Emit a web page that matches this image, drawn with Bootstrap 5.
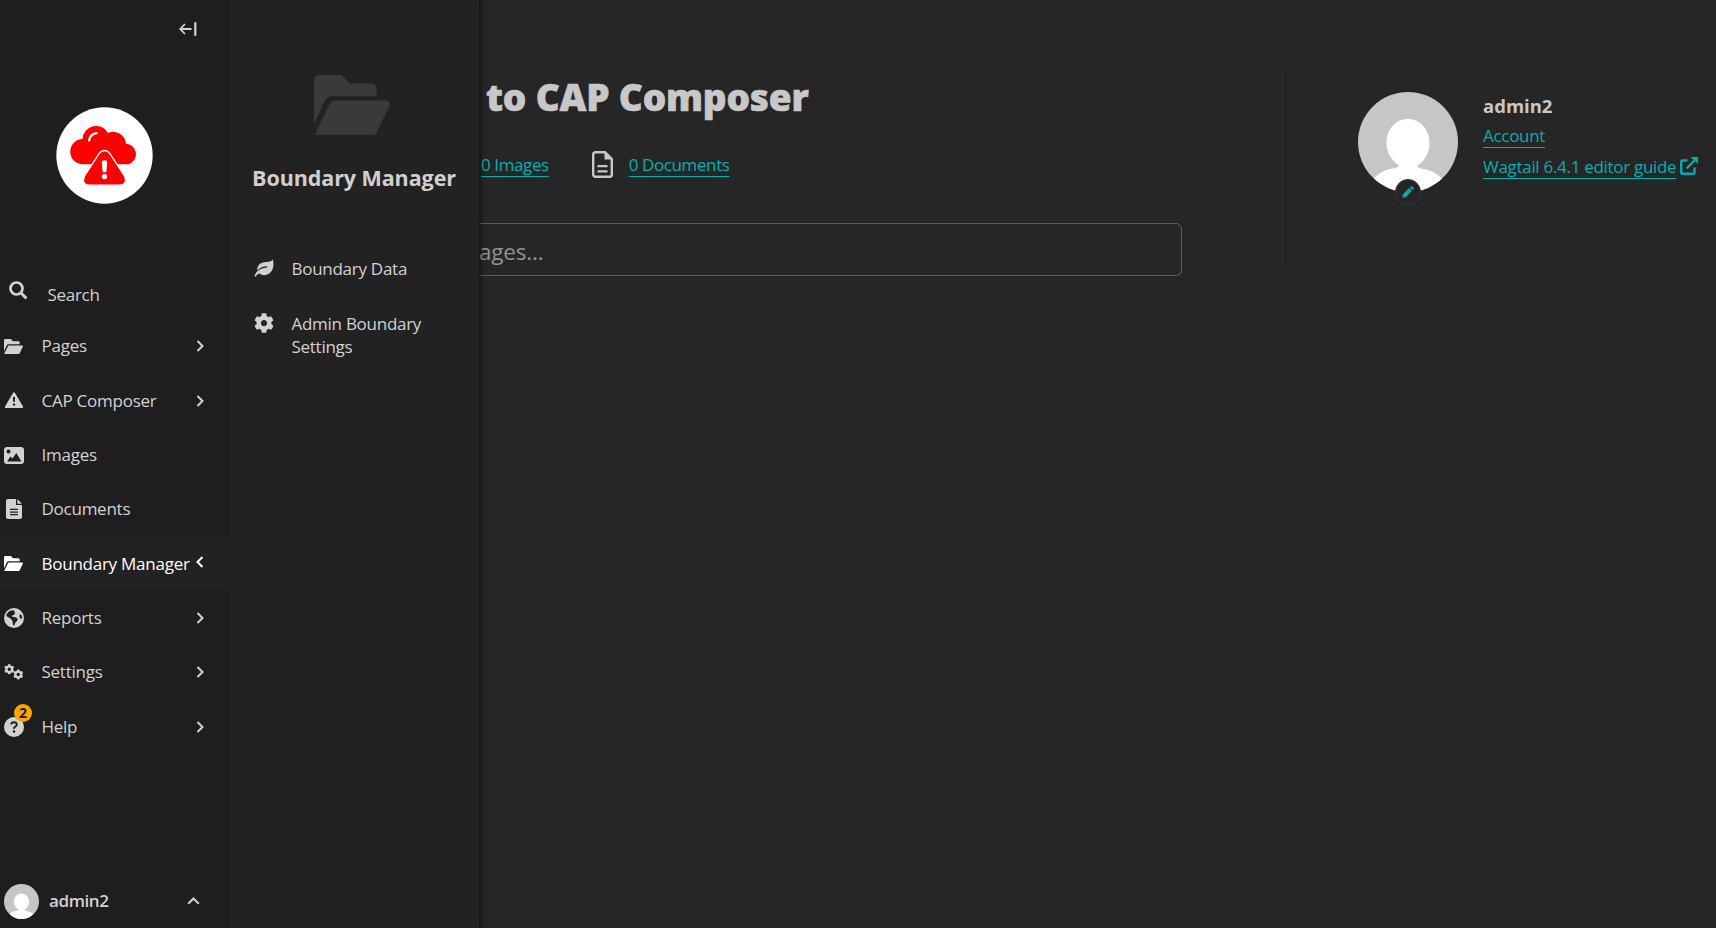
<!DOCTYPE html>
<html lang="en">
<head>
<meta charset="utf-8">
<meta name="viewport" content="width=device-width, initial-scale=1">
<title>CAP Composer</title>
<link href="https://cdn.jsdelivr.net/npm/bootstrap@5.3.0/dist/css/bootstrap.min.css" rel="stylesheet">
<style>
body{height:928px;overflow:hidden;background:#262626;color:#c8c8c8;font-family:"Open Sans","Noto Sans",sans-serif;font-size:17px;line-height:24px}
svg{display:block;fill:currentColor;flex:none}
.side{width:229px;background:#1e1e1e;color:#d2d2d2}
.collapse-row{height:106.5px;padding:22px 32px 0 0}
.logo{margin:0 0 0 56px}
.menu-search{margin-top:73.5px;height:41.5px;padding-left:9px}
.menu-search svg{margin-top:4px}
.menu-search span{margin:5.500px 0 0 19.500px;letter-spacing:-.3px}
.item{height:54.33px;padding:1.5px 25px 0 4px;letter-spacing:-.25px}
.item .ic{width:20px;margin-right:17.5px;position:relative}
.item.on{background:#222;color:#fff}
.item.on .chev{margin-bottom:3px}
.count{position:absolute;left:10px;top:-13px;width:18px;height:18px;border-radius:50%;background:#ffa500;color:#1e1e1e;font-size:14px;font-weight:700;line-height:17px;text-align:center;letter-spacing:0}
.userbar{height:54px;padding:0 29px 0 4px;font-weight:600}
.userbar span{margin-left:10px;letter-spacing:-.4px}
.face{border-radius:50%}
.fly{width:250px;background:#222;color:#d2d2d2;box-shadow:2px 0 4px rgba(0,0,0,.5);z-index:2;padding-top:75px}
.fly .big{margin-left:85px;color:#3a3a3a}
.fly h2{font-size:21.5px;font-weight:700;line-height:28px;margin:29px 0 0;letter-spacing:-.08px;color:#d0d0d0}
.fly-item{padding-left:25px;line-height:23px;letter-spacing:-.27px}
.fly-item svg{margin-right:17.5px}
.maincol{padding-top:72px}
.left{width:803px}
.left h1{font-size:37px;font-weight:800;line-height:44px;margin:3px 0 0 7px;letter-spacing:-.18px;-webkit-text-stroke:.6px currentColor}
.stats{margin:31px 0 0 2px;height:30px;letter-spacing:-.4px}
a,a:hover{color:#00b0b1}
a{text-decoration:underline;text-decoration-thickness:1px;text-underline-offset:5px}
.find{margin-top:43px;width:703px;height:53px;border:1px solid #5c5c5c;border-left:0;border-radius:0 6px 6px 0;color:#929292;font-size:22.5px;letter-spacing:-.2px}
.right{border-left:1px solid #333;height:194px;padding:20px 0 0 75px}
.ava{width:100px;height:100px;margin-right:25px}
.edit{position:absolute;left:37px;top:87px;width:26px;height:26px;border-radius:50%;background:#262626;border:1px solid #333;color:#00b0b1}
.who{font-size:18.5px;font-weight:700;line-height:28px}
.lk{line-height:31px;letter-spacing:-.3px}
</style>
</head>
<body class="d-flex">
<svg width="0" height="0" class="position-absolute">
<defs>
<symbol id="folder" viewBox="252 75 229 181"><path d="M252 223V92q0-17 17-17h66l24 26h65q17 0 17 17v21H306q-14 0-20 11z"/><path d="M254 255l45-93q5-10 14-10h156q15 3 10 18l-39 79q-3 6-10 6z"/></symbol>
<symbol id="person" viewBox="0 0 100 100"><path fill="#c6c6c6" d="M0 0h100v100H0z"/><path fill="#fff" d="M50 27c12 0 21.500 10 21.500 24 0 10-5 18-12.500 23 1 2 4 3 9 3.500 9 2 17 8 21 17V105H11V94c4-9 12-15 21-17 5-.5 8-1.500 9-3.500-7.500-5-12.500-13-12.500-22.500C28.500 37 38 27 50 27z"/></symbol>
<symbol id="chev" viewBox="0 0 8 12"><path d="M1.500 1l5 5-5 5" fill="none" stroke="currentColor" stroke-width="2"/></symbol>
<symbol id="gear" viewBox="0 0 512 512"><path d="M487.400 315.700l-42.600-24.600c4.300-23.200 4.300-47 0-70.200l42.600-24.600c4.900-2.800 7.100-8.600 5.500-14-11.100-35.600-30-67.800-54.700-94.600-3.800-4.100-10-5.100-14.800-2.300L380.800 110c-17.900-15.400-38.500-27.300-60.800-35.100V25.800c0-5.600-3.900-10.500-9.400-11.700-36.700-8.200-74.300-7.800-109.200 0-5.500 1.200-9.400 6.100-9.400 11.700V75c-22.200 7.900-42.800 19.800-60.800 35.100L88.700 85.500c-4.900-2.800-11-1.900-14.800 2.300-24.700 26.700-43.600 58.900-54.700 94.600-1.700 5.400.6 11.200 5.500 14L67.300 221c-4.300 23.200-4.300 47 0 70.200l-42.600 24.600c-4.900 2.800-7.100 8.600-5.500 14 11.100 35.600 30 67.800 54.700 94.600 3.800 4.100 10 5.100 14.800 2.300l42.600-24.600c17.900 15.400 38.500 27.300 60.800 35.100v49.200c0 5.600 3.900 10.500 9.400 11.700 36.700 8.200 74.300 7.800 109.200 0 5.500-1.200 9.400-6.100 9.400-11.700v-49.200c22.200-7.900 42.800-19.800 60.800-35.100l42.600 24.600c4.900 2.800 11 1.900 14.800-2.300 24.700-26.700 43.600-58.900 54.700-94.600 1.500-5.500-.7-11.300-5.600-14.100zM256 336c-44.100 0-80-35.900-80-80s35.900-80 80-80 80 35.900 80 80-35.900 80-80 80z"/></symbol>
</defs></svg>

<nav class="side d-flex flex-column flex-shrink-0">
  <div class="collapse-row d-flex justify-content-end align-items-start"><svg width="18" height="14" viewBox="0 0 18 14"><path d="M12.500 7H1.500M6 2L1.200 7 6 12" fill="none" stroke="currentColor" stroke-width="1.800"/><path d="M15.200.2h2.200v13.600h-2.200z"/></svg></div>
  <svg class="logo" width="97" height="97" viewBox="168 320 290 290"><circle cx="313" cy="465" r="144" fill="#fff"/><g fill="#f00"><path d="M249 491a37.500 37.500 0 0 1-2-75 41 41 0 0 1 77-18 37 37 0 0 1 53 32 31 31 0 0 1 7 61z"/><path d="M313 452q9 0 15 9l43 66q10 24-13 25h-90q-23-1-13-25l43-66q6-9 15-9z" stroke="#fff" stroke-width="8" paint-order="stroke"/></g><path d="M267 420q2-18 22-22" fill="none" stroke="#fff" stroke-width="7" stroke-linecap="round"/><path d="M305 486q0-7 8-7t8 7l-2 25q-1 5-6 5t-6-5z" fill="#fff"/><circle cx="313" cy="528" r="8" fill="#fff"/></svg>
  <div class="menu-search d-flex align-items-start"><svg width="19" height="19" viewBox="0 0 19 19"><circle cx="7.500" cy="7.500" r="6" fill="none" stroke="currentColor" stroke-width="2.700"/><path d="M12 12l5.400 5.400" stroke="currentColor" stroke-width="2.900"/></svg><span>Search</span></div>
  <div class="item d-flex align-items-center"><div class="ic"><svg width="19" height="15"><use href="#folder"/></svg></div><span class="flex-grow-1">Pages</span><svg class="chev" width="8" height="12"><use href="#chev"/></svg></div>
  <div class="item d-flex align-items-center"><div class="ic"><svg width="20" height="17" viewBox="0 0 20 17"><path fill-rule="evenodd" d="M9 1q1-1.500 2 0l8 13.500q.6 1.500-1 1.500H2q-1.600 0-1-1.500zM8.900 5l.3 5h1.600l.3-5zM10 11.300a1.200 1.200 0 1 0 .01 0z"/></svg></div><span class="flex-grow-1">CAP Composer</span><svg class="chev" width="8" height="12"><use href="#chev"/></svg></div>
  <div class="item d-flex align-items-center"><div class="ic"><svg width="20" height="17" viewBox="0 0 20 17"><path fill-rule="evenodd" d="M3 0h14q3 0 3 3v11q0 3-3 3H3q-3 0-3-3V3q0-3 3-3zM4.500 2.500a2 2 0 1 0 .01 0zM3 14.500h14.500L12.300 6 8.500 11.500 6.500 9.500z"/></svg></div><span>Images</span></div>
  <div class="item d-flex align-items-center"><div class="ic"><svg width="20" height="20" viewBox="0 0 20 20"><path fill-rule="evenodd" d="M4 0h8v6h6v12q0 2-2 2H4q-2 0-2-2V2q0-2 2-2zM6 9.800v1.300h8V9.800zM6 12.400v1.300h8v-1.300zM6 15v1.300h8V15z"/><path d="M13.300 0L18 4.700h-4.700z"/></svg></div><span>Documents</span></div>
  <div class="item on d-flex align-items-center"><div class="ic"><svg width="19" height="15"><use href="#folder"/></svg></div><span class="flex-grow-1">Boundary Manager</span><svg class="chev" width="8" height="12" viewBox="0 0 8 12"><path d="M6.500 1l-5 5 5 5" fill="none" stroke="currentColor" stroke-width="2"/></svg></div>
  <div class="item d-flex align-items-center"><div class="ic"><svg width="20" height="20" viewBox="0 0 20 20"><circle cx="10" cy="10" r="10"/><path fill="#1e1e1e" d="M9.500 2.200L11 3.500 10 4.500l1.500.8L9.500 7l-1.500.5.5 1.500 3.500.3 1.800 1.700-.8 2-1.800 1.700-.8 2.500H9L8.500 13l-2-2.500L3 8.500 2.200 7Q4 3.500 6 2.800zM15.800 6.200l1.800.8.700 3.500-1.600.3-1.300-1.800z"/></svg></div><span class="flex-grow-1">Reports</span><svg class="chev" width="8" height="12"><use href="#chev"/></svg></div>
  <div class="item d-flex align-items-center"><div class="ic"><svg width="20" height="16" viewBox="0 0 20 16"><use href="#gear" width="10.500" height="10.500"/><use href="#gear" x="9" y="5.200" width="10.500" height="10.500"/></svg></div><span class="flex-grow-1">Settings</span><svg class="chev" width="8" height="12"><use href="#chev"/></svg></div>
  <div class="item d-flex align-items-center"><div class="ic"><svg width="20" height="20" viewBox="0 0 20 20"><circle cx="10" cy="10" r="10"/><path d="M7.200 7.500Q7.500 5.200 10 5.200t2.800 2.200q0 1.500-1.500 2.200T10 11.800" fill="none" stroke="#1e1e1e" stroke-width="1.900"/><circle cx="10" cy="14.500" r="1.300" fill="#1e1e1e"/></svg><span class="count">2</span></div><span class="flex-grow-1">Help</span><svg class="chev" width="8" height="12"><use href="#chev"/></svg></div>
  <div class="userbar mt-auto d-flex align-items-center"><svg class="face" width="35" height="35"><use href="#person"/></svg><span class="flex-grow-1">admin2</span><svg width="13" height="8" viewBox="0 0 13 8"><path d="M1.200 6.800l5.300-5.300 5.300 5.300" fill="none" stroke="currentColor" stroke-width="2"/></svg></div>
</nav>

<section class="fly flex-shrink-0">
  <svg class="big" width="76" height="60"><use href="#folder"/></svg>
  <h2 class="text-center">Boundary Manager</h2>
  <div class="fly-item d-flex" style="margin-top:65px"><svg width="20" height="18" viewBox="0 0 20 18" style="margin-top:2px"><path d="M19 .5Q20 5 19 9q-2 6-7.500 7-3.500.6-6-1.500Q3 15 1.500 17.700L.5 17q2-6.500 9.500-8l3.500-.7-.2-1Q7 7.300 3.300 11.500 3 5 9 3.500q2-.5 6-.7Q17.500 2.500 19 .5z"/></svg><span>Boundary Data</span></div>
  <div class="fly-item d-flex" style="margin-top:32px"><svg width="20" height="20" style="margin-top:1px"><use href="#gear"/></svg><span>Admin Boundary<br>Settings</span></div>
</section>

<main class="maincol d-flex flex-grow-1">
  <div class="left">
    <h1>to CAP Composer</h1>
    <div class="stats d-flex align-items-center"><a href="#">0 Images</a><svg width="21" height="27" viewBox="0 0 21 27" style="margin:-2px 16px 0 43px"><path d="M3.500 1.200H13L19.800 8v15.500q0 2.300-2.300 2.300h-14q-2.300 0-2.300-2.300v-20q0-2.300 2.300-2.300z" fill="none" stroke="currentColor" stroke-width="2.400"/><path d="M12.500 1v7.500H20zM5.500 14h10v2.200h-10zM5.500 19.300h10v2.200h-10z"/></svg><a href="#">0 Documents</a></div>
    <div class="find d-flex align-items-center"><span class="pt-1">ages...</span></div>
  </div>
  <div class="right d-flex">
    <div class="ava position-relative"><svg class="face" width="100" height="100"><use href="#person"/></svg><div class="edit d-flex align-items-center justify-content-center"><svg width="12" height="12" viewBox="0 0 12 12"><path d="M.3 11.700l.8-3.600L7.300 2 10 4.700 3.900 10.900zM8 1.300l.9-.8q.8-.6 1.500 0l1.200 1.200q.5.700 0 1.400l-.9.900z"/></svg></div></div>
    <div>
      <div class="who">admin2</div>
      <div class="lk"><a href="#">Account</a></div>
      <div class="lk d-flex align-items-center"><a href="#">Wagtail 6.4.1 editor guide</a><svg width="18" height="18" viewBox="0 0 18 18" style="margin:-1px 0 0 4px;color:#00b0b1"><path d="M7.500 3.500H2.700q-1.500 0-1.500 1.500v10.200q0 1.500 1.500 1.500H13q1.500 0 1.500-1.500V10.500M6.500 11.500l8-8" fill="none" stroke="currentColor" stroke-width="2.400"/><path d="M10.500 0H18v7z"/></svg></div>
    </div>
  </div>
</main>
<script src="https://cdn.jsdelivr.net/npm/bootstrap@5.3.0/dist/js/bootstrap.bundle.min.js"></script>
</body>
</html>
